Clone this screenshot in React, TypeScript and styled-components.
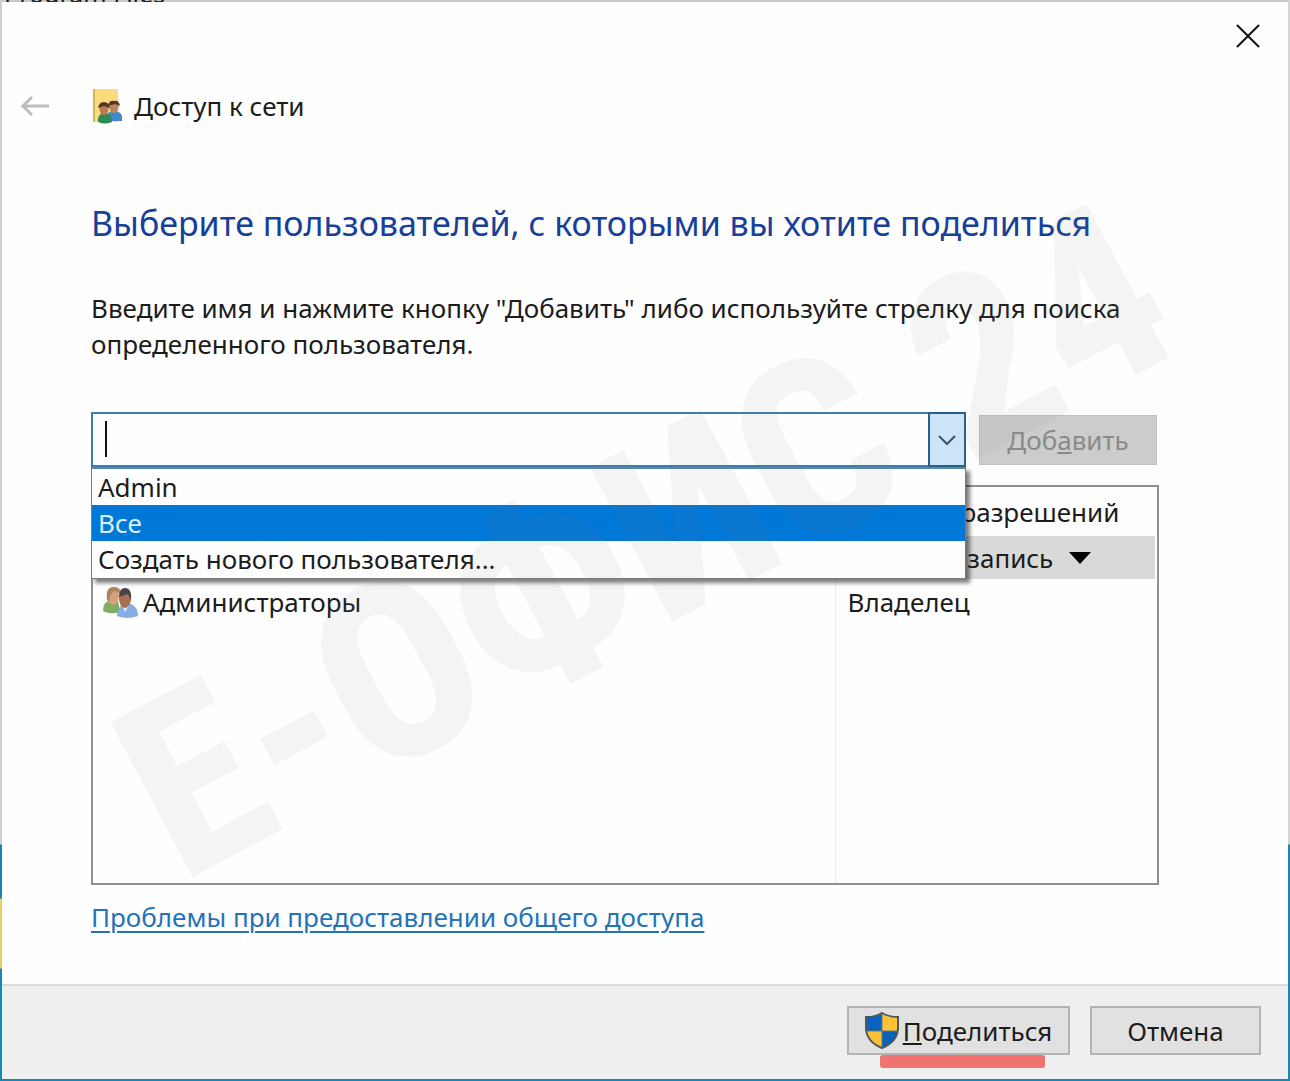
import React, { useState } from "react";
import styled, { createGlobalStyle } from "styled-components";

const GlobalStyle = createGlobalStyle`
  * { box-sizing: border-box; }
  body { margin: 0; }
  body, button, input, table {
    font-family: "Noto Sans", "Open Sans", sans-serif;
    font-size: 26px;
    line-height: 36px;
    color: #1c1c1c;
  }
`;

const Desktop = styled.div`
  position: relative;
  display: flex;
  flex-direction: column;
  min-height: 100vh;
  padding: 0 2px 2px;
  overflow: hidden;
  background:
    linear-gradient(#cfcfcf 0, #cfcfcf 844px, #1688ae 845px, #1688ae 898px, #e8cf62 899px, #e8cf62 968px, #1688b4 969px) left / 2px 100% no-repeat,
    linear-gradient(#d4d4d4 0, #d4d4d4 844px, #1688b4 845px);
`;

const Behind = styled.div`
  display: flex;
  align-items: flex-end;
  height: 2px;
  overflow: hidden;
  background: #c9c9c9;
`;

const BehindText = styled.span`
  padding-left: 2px;
  font-size: 25px;
  line-height: 18px;
`;

const Dialog = styled.main`
  flex: 1;
  display: flex;
  flex-direction: column;
  background: #fefefe;
`;

const CloseBar = styled.div`
  display: flex;
  justify-content: flex-end;
  padding: 18px 24px 0;
`;

const IconButton = styled.button`
  display: grid;
  place-items: center;
  width: 32px;
  height: 32px;
  padding: 0;
  border: 0;
  background: none;
`;

const TitleBar = styled.header`
  display: flex;
  align-items: center;
  gap: 41px;
  padding: 36px 17px 0;
`;

const Title = styled.div`
  display: flex;
  align-items: center;
  gap: 11px;
`;

const Content = styled.section`
  display: flex;
  flex-direction: column;
  align-items: stretch;
  padding: 75px 129px 30px 89px;
`;

const Heading = styled.h1`
  margin: 0;
  font-size: 34px;
  line-height: 48px;
  font-weight: 400;
  color: #17409a;
`;

const Intro = styled.p`
  margin: 43px 0 50px;
`;

const AddRow = styled.div`
  display: flex;
  align-items: center;
  gap: 13px;
`;

const Combo = styled.div`
  position: relative;
  flex: 1;
  display: flex;
  height: 55px;
  border: 2px solid #3a7fb2;
  background: #fefefe;
`;

const Caret = styled.span`
  width: 2px;
  height: 36px;
  margin: 7px 0 0 12px;
  background: #111;
`;

const Field = styled.input`
  flex: 1;
  min-width: 0;
  border: 0;
  padding: 0 4px;
  outline: 0;
  background: transparent;
`;

const Arrow = styled.button`
  display: grid;
  place-items: center;
  width: 38px;
  margin: -2px -2px -2px 0;
  padding: 0;
  border: 2px solid #2b608a;
  background: #cce4f7;
`;

const List = styled.ul`
  position: absolute;
  z-index: 2;
  top: 53px;
  left: -2px;
  right: -2px;
  margin: 0;
  padding: 0 0 1px;
  list-style: none;
  border: 1px solid #7b7b7b;
  border-top: 2px solid #5b87a8;
  background: #fefefe;
  box-shadow: 4px 4px 4px rgba(0, 0, 0, 0.5);
`;

const Option = styled.li<{ $active: boolean }>`
  height: 36px;
  padding: 0 6px;
  color: ${(p) => (p.$active ? "#d9efff" : "#1c1c1c")};
  background: ${(p) => (p.$active ? "#0078d7" : "transparent")};
`;

const AddButton = styled.button`
  width: 178px;
  height: 50px;
  margin-right: 2px;
  padding: 0;
  border: 1px solid #c0c0c0;
  background: #cccccc;
  &:disabled { color: #8a8a8a; }
`;

const UserPanel = styled.div`
  min-height: 400px;
  margin-top: 18px;
  display: flex;
  border: 2px solid #8f8f94;
  padding-right: 2px;
`;

const Users = styled.table`
  flex: 1;
  border-collapse: collapse;
  table-layout: fixed;
`;

const LevelColumn = styled.col`
  width: 320px;
`;

const Row = styled.tr<{ $selected?: boolean; $height: number }>`
  height: ${(p) => p.$height}px;
  background: ${(p) => (p.$selected ? "#d9d9d9" : "transparent")};
`;

const Cell = styled.td`
  padding: 0 10px;
  text-align: left;
  font-weight: 400;
  white-space: nowrap;
  & + & { padding: 0 0 0 12px; border-left: 1px solid #ececf2; }
`;

const Person = styled.span`
  display: flex;
  align-items: center;
  gap: 5px;
`;

const LevelButton = styled.button`
  display: flex;
  align-items: center;
  gap: 16px;
  padding: 0;
  border: 0;
  background: none;
`;

const HelpLink = styled.a`
  align-self: flex-start;
  margin-top: 14px;
  color: #2473b8;
  text-decoration-thickness: 2px;
  text-underline-offset: 4px;
`;

const Footer = styled.footer`
  display: flex;
  justify-content: flex-end;
  gap: 20px;
  margin-top: auto;
  padding: 20px 27px 24px;
  border-top: 2px solid #dddddd;
  background: #efefef;
`;

const FooterButton = styled.button<{ $width: number }>`
  display: flex;
  align-items: center;
  justify-content: center;
  gap: 4px;
  width: ${(p) => p.$width}px;
  height: 49px;
  padding: 0;
  border: 2px solid #b4b4b4;
  background: #e1e1e1;
`;

const Marked = styled.div`
  position: relative;
`;

const MarkerStroke = styled.span`
  position: absolute;
  left: 33px;
  top: 49px;
  width: 165px;
  height: 13px;
  border-radius: 3px;
  background: #ef7470;
`;

const Watermark = styled.div`
  position: absolute;
  inset: 0;
  z-index: 3;
  display: grid;
  place-items: center;
  pointer-events: none;
  white-space: nowrap;
  font-family: "Roboto Condensed", "Open Sans Condensed", Roboto, sans-serif;
  font-weight: 800;
  font-size: 246px;
  line-height: 246px;
  color: rgba(128, 128, 128, 0.08);
`;

const Slant = styled.span`
  transform: rotate(-28deg);
`;

const CloseIcon = () => (
  <svg width="24" height="24" viewBox="0 0 24 24" stroke="#111" strokeWidth="2">
    <path d="M1 1 23 23M23 1 1 23" />
  </svg>
);

const BackIcon = () => (
  <svg width="30" height="22" viewBox="0 0 30 22" fill="none" stroke="#bdbdbd" strokeWidth="3">
    <path d="M29 11H3M12 2 3 11 12 20" />
  </svg>
);

const ShareIcon = () => (
  <svg width="31" height="36" viewBox="0 0 31 36">
    <path d="M1 1H26V34H1Z" fill="#fbdc7c" />
    <path d="M1 1H3V34H1Z" fill="#d9b554" />
    <path d="M15 33V28Q16 23 22 23T30 28V33Z" fill="#4389cc" />
    <ellipse cx="22" cy="19" rx="4.5" ry="6" fill="#bd8358" />
    <path d="M16 18Q17 12 22 13 27 12 28 18L23 16Z" fill="#51382b" />
    <path d="M6 34Q5 26 12 25 20 25 20 34 13 37 6 34Z" fill="#2f8a55" />
    <ellipse cx="12" cy="21" rx="4.5" ry="6" fill="#bb7a52" />
    <path d="M6 20Q7 14 12 14T18 20L12 18Z" fill="#49362c" />
  </svg>
);

const PeopleIcon = () => (
  <svg width="35" height="32" viewBox="0 0 35 32">
    <path d="M0 25Q0 16 6 15L15 15 17 26Q7 29 0 25Z" fill="#7fae62" />
    <ellipse cx="10" cy="10" rx="6" ry="9" fill="#d7a07c" />
    <path d="M4 14Q2 1 11 1 18 1 18 8L12 5Q7 6 6 16Z" fill="#a98763" />
    <path d="M14 30Q14 21 20 19L28 18Q35 21 35 30 24 34 14 30Z" fill="#87aee0" />
    <path d="M19 19 22 26 27 18Z" fill="#dceaf8" />
    <ellipse cx="22" cy="13" rx="6" ry="9" fill="#a96f50" />
    <path d="M16 11Q16 2 22 2 29 2 28 14L25 8Z" fill="#4c4145" />
  </svg>
);

const ShieldIcon = () => (
  <svg width="34" height="37" viewBox="0 0 34 37">
    <path d="M17 1Q10 5 1 5V17Q2 30 17 36Z" fill="#0b62bd" />
    <path d="M17 1Q24 5 33 5V17Q32 30 17 36Z" fill="#ffc234" />
    <path d="M1 19H17V36Q3 30 1 19Z" fill="#ffc234" />
    <path d="M17 19H33Q31 30 17 36Z" fill="#0b62bd" />
    <path d="M17 1Q10 5 1 5V17Q2 30 17 36 32 30 33 17V5Q24 5 17 1Z" fill="none" stroke="#4b5960" strokeWidth="2" />
    <path d="M17 2V35M2 19H32" stroke="#5f7d7c" />
  </svg>
);

const options = ["Admin", "Все", "Создать нового пользователя..."];

export default function App() {
  const [active, setActive] = useState(1);
  return (
    <Desktop>
      <GlobalStyle />
      <Behind><BehindText>Program Files</BehindText></Behind>
      <Dialog>
        <CloseBar>
          <IconButton aria-label="Закрыть"><CloseIcon /></IconButton>
        </CloseBar>
        <TitleBar>
          <IconButton aria-label="Назад"><BackIcon /></IconButton>
          <Title><ShareIcon />Доступ к сети</Title>
        </TitleBar>
        <Content>
          <Heading>Выберите пользователей, с которыми вы хотите поделиться</Heading>
          <Intro>
            Введите имя и нажмите кнопку "Добавить" либо используйте стрелку для поиска определенного пользователя.
          </Intro>
          <AddRow>
            <Combo>
              <Caret />
              <Field type="text" aria-label="Имя пользователя" />
              <Arrow aria-label="Показать список">
                <svg width="18" height="12" viewBox="0 0 18 12" fill="none" stroke="#45535e" strokeWidth="2">
                  <path d="M1 2 9 10 17 2" />
                </svg>
              </Arrow>
              <List role="listbox" aria-label="Пользователи">
                {options.map((text, i) => (
                  <Option key={text} role="option" aria-selected={i === active} $active={i === active} onMouseEnter={() => setActive(i)}>
                    {text}
                  </Option>
                ))}
              </List>
            </Combo>
            <AddButton disabled>Доб<u>а</u>вить</AddButton>
          </AddRow>
          <UserPanel>
            <Users>
              <colgroup><col /><LevelColumn /></colgroup>
              <tbody>
                <Row $height={49}>
                  <Cell />
                  <Cell>Уровень разрешений</Cell>
                </Row>
                <Row $height={43} $selected>
                  <Cell />
                  <Cell>
                    <LevelButton>
                      Чтение и запись
                      <svg width="22" height="12" viewBox="0 0 22 12"><path d="M0 0H22L11 12Z" /></svg>
                    </LevelButton>
                  </Cell>
                </Row>
                <Row $height={46}>
                  <Cell><Person><PeopleIcon />Администраторы</Person></Cell>
                  <Cell>Владелец</Cell>
                </Row>
                <Row $height={258}><Cell /><Cell /></Row>
              </tbody>
            </Users>
          </UserPanel>
          <HelpLink href="#help">Проблемы при предоставлении общего доступа</HelpLink>
        </Content>
        <Footer>
          <Marked>
            <FooterButton $width={223}><ShieldIcon /><span><u>П</u>оделиться</span></FooterButton>
            <MarkerStroke />
          </Marked>
          <FooterButton $width={171}>Отмена</FooterButton>
        </Footer>
      </Dialog>
      <Watermark aria-hidden="true"><Slant>Е-ОФИС 24</Slant></Watermark>
    </Desktop>
  );
}
